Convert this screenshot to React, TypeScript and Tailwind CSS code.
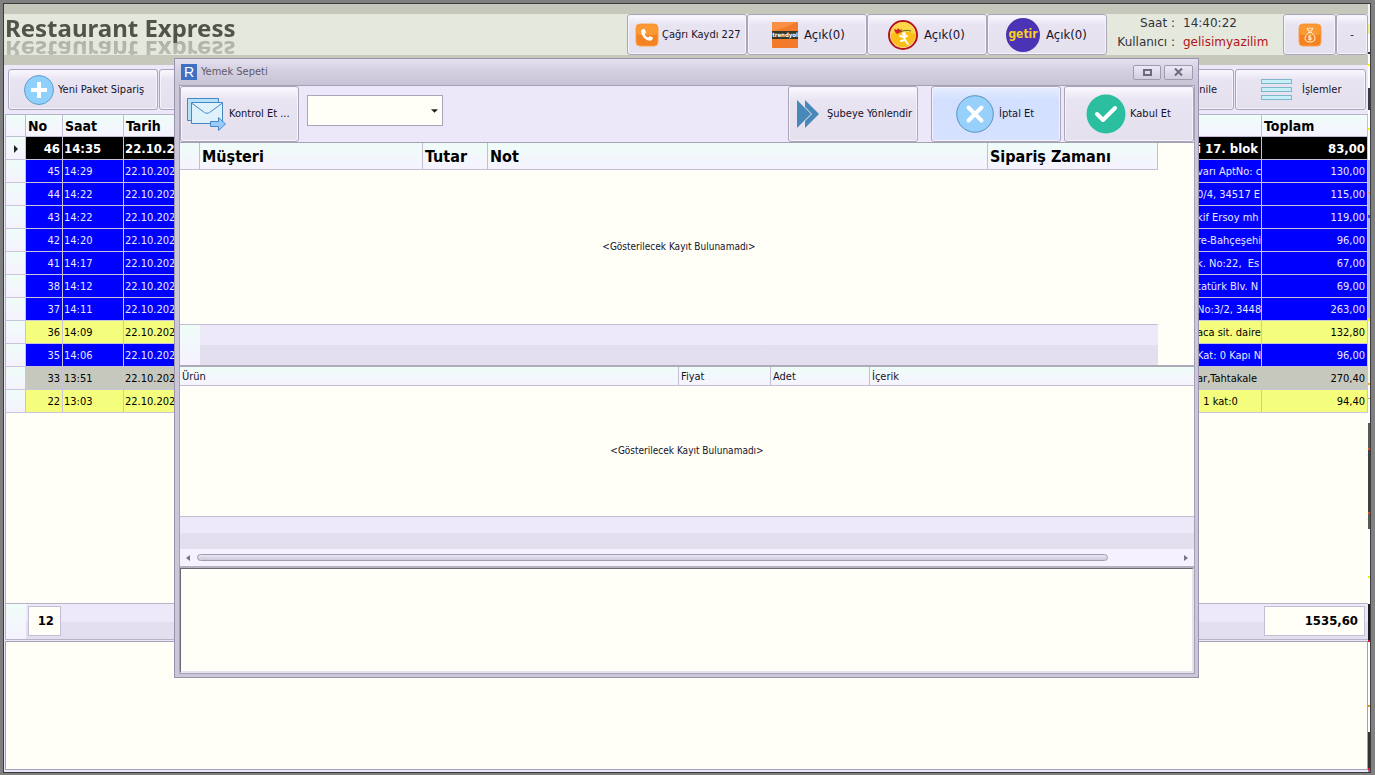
import { useState } from "react";
import type { ReactNode } from "react";

type OrderRow = {
  no: number;
  time: string;
  address: string;
  total: string;
  tone: "selected" | "blue" | "yellow" | "gray";
};

const ORDERS: OrderRow[] = [
  { no: 46, time: "14:35", address: "i 17. blok", total: "83,00", tone: "selected" },
  { no: 45, time: "14:29", address: "varı AptNo: c", total: "130,00", tone: "blue" },
  { no: 44, time: "14:22", address: "0/4, 34517 E", total: "115,00", tone: "blue" },
  { no: 43, time: "14:22", address: "kif Ersoy mh", total: "119,00", tone: "blue" },
  { no: 42, time: "14:20", address: "re-Bahçeşehi", total: "96,00", tone: "blue" },
  { no: 41, time: "14:17", address: "k. No:22,  Es", total: "67,00", tone: "blue" },
  { no: 38, time: "14:12", address: "tatürk Blv. N", total: "69,00", tone: "blue" },
  { no: 37, time: "14:11", address: "No:3/2, 3448", total: "263,00", tone: "blue" },
  { no: 36, time: "14:09", address: "aca sit. daire", total: "132,80", tone: "yellow" },
  { no: 35, time: "14:06", address: "Kat: 0 Kapı N", total: "96,00", tone: "blue" },
  { no: 33, time: "13:51", address: "ar,Tahtakale", total: "270,40", tone: "gray" },
  { no: 22, time: "13:03", address: "  1 kat:0", total: "94,40", tone: "yellow" },
];

const TONES = {
  selected: "bg-black text-white text-[13px] font-bold",
  blue: "bg-[#0000fe] text-[#e8e8ff]",
  yellow: "bg-[#f5fd7d] text-black",
  gray: "bg-[#c6c8bd] text-black",
};

// Slice of the desktop that shows past the right edge of the window
const DESKTOP_EDGE = [
  "h-[20px] bg-[#f4f4f4]",
  "h-[10px] bg-[#f2f58c]",
  "h-[18px] bg-white",
  "h-[2px] bg-[#333333]",
  "h-[10px] bg-white",
  "h-[2px] bg-[#f5f500]",
  "h-[22px] bg-white",
  "h-[22px] bg-[#3a3944]",
  "h-[18px] bg-white",
  "h-[2px] bg-[#f5f500]",
  "h-[30px] bg-white",
  "h-[32px] bg-[#b3b8f6]",
  "h-[2px] bg-[#f0a050]",
  "h-[21px] bg-[#b3b8f6]",
  "h-[3px] bg-[#3a40d0]",
  "h-[100px] bg-[#b3b8f6]",
  "h-[3px] bg-[#f5f500]",
  "h-[62px] bg-[#f6f6e0]",
  "h-[2px] bg-[#f0b000]",
  "h-[13px] bg-white",
  "h-[1px] bg-[#c8b040]",
  "h-[24px] bg-white",
  "h-[25px] bg-[#5a5a55]",
  "h-[2px] bg-[#e05010]",
  "h-[62px] bg-[#40403c]",
  "h-[2px] bg-[#e05010]",
  "h-[15px] bg-[#5a5a55]",
  "h-[47px] bg-white",
  "h-[2px] bg-[#e6f500]",
  "h-[26px] bg-white",
  "h-[36px] bg-[#1c1c1c]",
  "h-[2px] bg-[#e01030]",
  "h-[63px] bg-white",
  "h-[2px] bg-[#f09000]",
  "h-[25px] bg-white",
  "h-[36px] bg-[#33362f]",
  "h-[2px] bg-[#e01030]",
];

function ToolButton({ className, children }: { className: string; children: ReactNode }) {
  return (
    <button
      type="button"
      className={`flex shrink-0 items-center whitespace-nowrap rounded-[3px] border border-[#aaa6ba] text-[#16122a] shadow-[inset_0_0_0_1px_#f6f3fd] ${className}`}
    >
      {children}
    </button>
  );
}

const FACE = "bg-linear-to-b from-[#fbf9ff] via-[#e8e4f2] via-25% to-[#e4e0ee]";

function PhoneIcon() {
  return (
    <svg width="24" height="24" viewBox="0 0 24 24" aria-hidden="true">
      <rect x="1" y="1" width="22" height="22" rx="4" fill="#f58220" stroke="#f9a44c" />
      <rect x="2" y="2" width="20" height="10" rx="3" fill="#fb9a33" />
      <path d="M7.4 6.2 9.6 6l1.5 3.4-1.6 1.5c.8 1.700 2 2.900 3.700 3.700l1.500-1.600 3.200 1.500c0 1.900-1 3.200-2.700 3.200C10.700 17.600 6.500 13.200 6.300 8.700c0-1.200.3-2 1.100-2.500z" fill="#fff" />
    </svg>
  );
}

function TrendyolIcon() {
  return (
    <svg width="26" height="26" viewBox="0 0 26 26" aria-hidden="true">
      <rect width="26" height="26" rx="1" fill="#f27a2a" />
      <path d="M0 9C9 7 18 4 25 0H1a1 1 0 0 0-1 1z" fill="#fa8f45" />
      <rect y="9" width="26" height="8" fill="#333a2c" />
      <text x="13" y="15" textAnchor="middle" fontSize="6" fontWeight="700" fill="#fff" fontFamily="DejaVu Sans Condensed, sans-serif">trendyol</text>
    </svg>
  );
}

function YemekSepetiIcon() {
  return (
    <svg width="30" height="30" viewBox="0 0 30 30" aria-hidden="true">
      <circle cx="15" cy="15" r="14" fill="#fdf3e0" stroke="#b3151b" strokeWidth="2" />
      <circle cx="15" cy="15" r="12.500" fill="#fbbd16" />
      <path d="M3 14a12 12 0 0 1 24 0c-8-3-16-3-24 0z" fill="#fdd648" />
      <path d="m6 9 3 1 1-2 2 2 2-1-1 3-4 2-2-2z" fill="#d3202a" />
      <path d="M12 12c4-2 8-2 11-1" fill="none" stroke="#5a6a20" />
      <circle cx="16" cy="14" r="2" fill="#fff" />
      <path d="m12 16 4 1 3-1M16 17l1 3 3 4M17 20l-4 1" fill="none" stroke="#fff" strokeWidth="2" strokeLinecap="round" strokeLinejoin="round" />
    </svg>
  );
}

function GetirIcon() {
  return (
    <svg width="34" height="34" viewBox="0 0 34 34" aria-hidden="true">
      <circle cx="17" cy="17" r="17" fill="#4c32b4" />
      <text x="17" y="20" textAnchor="middle" fontSize="12" fontWeight="700" fill="#f8cf1c" fontFamily="DejaVu Sans Condensed, sans-serif">getir</text>
    </svg>
  );
}

function MoneyBagIcon() {
  return (
    <svg width="24" height="24" viewBox="0 0 24 24" fill="none" aria-hidden="true">
      <rect x="1" y="1" width="22" height="22" rx="4" fill="#f58220" stroke="#f9a44c" />
      <rect x="2" y="2" width="20" height="10" rx="3" fill="#fb9a33" />
      <path d="m9 5 1.500 3h3L15 5l-1.500 1L12 4.500 10.500 6zM10 9.500h4M10.500 10C8 11.500 7 13.500 7 15.500 7 18 9 19 12 19s5-1 5-3.500c0-2-1-4-3.500-5.500" stroke="#fff3de" strokeLinejoin="round" />
      <text x="12" y="17" textAnchor="middle" fontSize="7" fontWeight="700" fill="#fff3de" fontFamily="DejaVu Sans Condensed, sans-serif">$</text>
    </svg>
  );
}

function PlusIcon() {
  return (
    <svg width="32" height="32" viewBox="0 0 32 32" aria-hidden="true">
      <circle cx="16" cy="16" r="14.500" fill="#8fd0fc" stroke="#5f9fcb" />
      <path d="M16 8v16M8 16h16" stroke="#fff" strokeWidth="4" />
    </svg>
  );
}

function ListIcon() {
  return (
    <svg width="32" height="24" viewBox="0 0 32 24" fill="#c6effa" stroke="#7fb6cc" aria-hidden="true">
      <rect x="1.500" y="1.500" width="30" height="4" />
      <rect x="1.500" y="9.500" width="30" height="4" />
      <rect x="1.500" y="17.500" width="30" height="4" />
    </svg>
  );
}

function MailIcon() {
  return (
    <svg width="40" height="34" viewBox="0 0 40 34" stroke="#4788c4" aria-hidden="true">
      <path d="M.5 1.500h31v22H.5z" fill="#b6e2f8" />
      <path d="M4.500 5.500h31v21h-31z" fill="#dff2fb" />
      <path d="m4.500 6 13 9.500c1.500 1 3.500 1 5 0l13-9.500" fill="none" />
      <path d="M23.500 24.500h8v-4l7 6.500-7 6.500v-4h-8z" fill="#98ccfd" />
    </svg>
  );
}

function ForwardIcon() {
  return (
    <svg width="22" height="28" viewBox="0 0 22 28" fill="#4788b8" aria-hidden="true">
      <path d="M8 0l14 14L8 28z" />
      <path d="M0 0l14 14L0 28z" stroke="#e8e4f2" strokeWidth="1.500" paintOrder="stroke" />
    </svg>
  );
}

function CancelIcon() {
  return (
    <svg width="38" height="38" viewBox="0 0 38 38" aria-hidden="true">
      <circle cx="19" cy="19" r="18.300" fill="#98d0fc" stroke="#5d92bc" />
      <path d="m12.500 12.500 13 13m0-13-13 13" stroke="#fff" strokeWidth="4" strokeLinecap="round" />
    </svg>
  );
}

function AcceptIcon() {
  return (
    <svg width="40" height="40" viewBox="0 0 40 40" aria-hidden="true">
      <circle cx="20" cy="20" r="19.500" fill="#2bbf9f" />
      <path d="m11 20 6 6 12-12" fill="none" stroke="#fff" strokeWidth="4" strokeLinecap="round" strokeLinejoin="round" />
    </svg>
  );
}

function AppHeader() {
  return (
    <header className="flex h-[61px] shrink-0 bg-[#c6c8bc] pt-[10px] pb-[10px]">
      <div className="flex min-w-0 flex-1 bg-[#e5e9dd]">
        <div className="-mt-[10px] flex-1 overflow-hidden pt-2">
          <h1 className="ml-px h-8 whitespace-nowrap font-['Noto_Sans'] text-2xl leading-8 font-bold text-[#50544a] [-webkit-box-reflect:below_-10px_linear-gradient(rgba(0,0,0,0.25),rgba(0,0,0,0.4))]">
            Restaurant Express
          </h1>
        </div>
        <ToolButton className={`w-[120px] gap-[3px] pl-[7px] ${FACE}`}>
          <PhoneIcon />
          Çağrı Kaydı 227
        </ToolButton>
        <ToolButton className={`w-[120px] gap-[6px] pl-6 text-[13px] ${FACE}`}>
          <TrendyolIcon />
          Açık(0)
        </ToolButton>
        <ToolButton className={`w-[120px] gap-[6px] pl-5 text-[13px] ${FACE}`}>
          <YemekSepetiIcon />
          Açık(0)
        </ToolButton>
        <ToolButton className={`w-[120px] gap-[6px] pl-[18px] text-[13px] ${FACE}`}>
          <GetirIcon />
          Açık(0)
        </ToolButton>
        <dl className="grid w-44 shrink-0 grid-cols-[68px_1fr] content-start font-['DejaVu_Sans'] text-xs leading-[19px] text-[#33333f]">
          <dt className="text-right whitespace-nowrap">Saat :</dt>
          <dd className="pl-2">14:40:22</dd>
          <dt className="text-right whitespace-nowrap">Kullanıcı :</dt>
          <dd className="pl-2 text-[#b01420]">gelisimyazilim</dd>
        </dl>
        <ToolButton className={`w-[53px] justify-center ${FACE}`}>
          <MoneyBagIcon />
        </ToolButton>
        <ToolButton className={`w-8 justify-center ${FACE}`}>-</ToolButton>
      </div>
    </header>
  );
}

function OrdersToolbar() {
  return (
    <div className="flex h-[49px] shrink-0 gap-px bg-[#ede8f9] pt-1 pr-[2px] pb-1 pl-[3px]">
      <ToolButton className={`ml-px w-[150px] gap-[3px] pl-[14px] ${FACE}`}>
        <PlusIcon />
        Yeni Paket Sipariş
      </ToolButton>
      <ToolButton className={`w-[150px] justify-center ${FACE}`}>{null}</ToolButton>
      <div className="flex-1" />
      <ToolButton className={`w-[150px] justify-end pr-4 ${FACE}`}>Yenile</ToolButton>
      <ToolButton className={`w-[131px] gap-[10px] pl-6 ${FACE}`}>
        <ListIcon />
        İşlemler
      </ToolButton>
    </div>
  );
}

const HEAD_CELL = "border-r border-b border-[#c4bed4] text-left font-bold whitespace-nowrap";
const CELL = "overflow-hidden border-r border-b border-[#c9c3dc] pt-[2px] whitespace-pre";

function OrdersTable() {
  return (
    <div className="flex min-h-0 flex-1 flex-col border-t border-l border-[#b9b3c9] bg-[#fffff8]">
      <table className="w-full table-fixed border-separate border-spacing-0">
        <colgroup>
          <col className="w-5" />
          <col className="w-[37px]" />
          <col className="w-[61px]" />
          <col />
          <col className="w-[66px]" />
          <col className="w-[106px]" />
        </colgroup>
        <thead>
          <tr className="h-[22px] bg-linear-to-b from-[#effdf8] to-[#f6f2ff] text-sm text-black">
            <th className={HEAD_CELL} />
            <th className={`pl-[2px] ${HEAD_CELL}`}>No</th>
            <th className={`pl-[2px] ${HEAD_CELL}`}>Saat</th>
            <th className={`pl-[2px] ${HEAD_CELL}`}>Tarih</th>
            <th className={HEAD_CELL} />
            <th className={`pl-[2px] ${HEAD_CELL}`}>Toplam</th>
          </tr>
        </thead>
        <tbody>
          {ORDERS.map((o) => (
            <tr key={o.no} className={`h-[23px] ${TONES[o.tone]}`}>
              <td className={`bg-linear-to-b from-[#effdf8] to-[#f6f2ff] ${CELL}`}>
                {o.tone === "selected" && (
                  <svg className="ml-2" width="4" height="8" viewBox="0 0 4 8" aria-hidden="true">
                    <path d="M0 0l4 4-4 4z" fill="#222" />
                  </svg>
                )}
              </td>
              <td className={`pr-[2px] text-right ${CELL}`}>{o.no}</td>
              <td className={`pl-px ${CELL}`}>{o.time}</td>
              <td className={`pl-px ${CELL}`}>22.10.2022</td>
              <td className={`pl-px ${CELL}`}>{o.address}</td>
              <td className={`pr-[2px] text-right ${CELL}`}>{o.total}</td>
            </tr>
          ))}
        </tbody>
      </table>
      <div className="flex-1" />
      <div className="flex h-[37px] shrink-0 items-start justify-between border-y border-[#b9b3c9] bg-linear-to-b from-[#ede9f8] from-50% to-[#e3dfee] to-50% pr-[3px] text-[13px] font-bold text-black">
        <div className="flex items-start gap-[2px] self-stretch">
          <div className="w-5 self-stretch bg-linear-to-b from-[#effdf8] to-[#f6f2ff]" />
          <output className="mt-[2px] h-[30px] w-[33px] border border-[#c4bed4] bg-[#fffff8] pr-[6px] text-right leading-7">12</output>
        </div>
        <output className="mt-[2px] h-[30px] w-[101px] border border-[#c4bed4] bg-[#fffff8] pr-[6px] text-right leading-7">1535,60</output>
      </div>
    </div>
  );
}

function EmptyRow({ span }: { span: number }) {
  return (
    <td colSpan={span} className="text-center text-[10px] text-[#16122a]">
      &lt;Gösterilecek Kayıt Bulunamadı&gt;
    </td>
  );
}

function BasketDialog() {
  const [platform, setPlatform] = useState("");
  const [note, setNote] = useState("");

  return (
    <section
      role="dialog"
      aria-labelledby="basket-title"
      className="absolute top-[58px] right-[176px] left-[174px] flex flex-col border border-[#9994ab] bg-[#cbc6d8] pr-[3px] pb-[3px] pl-1"
    >
      <div className="-mr-[3px] -ml-1 flex h-[26px] shrink-0 items-center bg-linear-to-b from-[#e6e1f1] via-[#d6d1e1] via-40% to-[#c9c4d5] pr-[5px] pl-[6px]">
        <span className="mr-1 flex size-4 items-center justify-center bg-[#3f70c4] font-['Liberation_Sans'] text-sm leading-4 text-white">R</span>
        <h2 id="basket-title" className="flex-1 text-[#5d596c]">Yemek Sepeti</h2>
        <button type="button" aria-label="Büyüt" className="mr-[3px] flex h-[15px] w-7 items-center justify-center rounded-[2px] border border-[#9f9aaf] bg-linear-to-b from-[#ece8f5] to-[#d3cedf]">
          <svg width="9" height="7" viewBox="0 0 9 7" aria-hidden="true">
            <rect x="1" y="1" width="7" height="5" fill="none" stroke="#6d697b" strokeWidth="2" />
          </svg>
        </button>
        <button type="button" aria-label="Kapat" className="flex h-[15px] w-[29px] items-center justify-center rounded-[2px] border border-[#9f9aaf] bg-linear-to-b from-[#ece8f5] to-[#d3cedf]">
          <svg width="9" height="8" viewBox="0 0 9 8" aria-hidden="true">
            <path d="M1 .5l7 7M8 .5l-7 7" stroke="#6d697b" strokeWidth="2" />
          </svg>
        </button>
      </div>

      <div className="border border-[#a5a0b5] bg-[#fffff8]">
        <div className="flex h-[57px] items-start border-b border-[#a5a0b5] bg-[#ede8f9]">
          <ToolButton className={`h-[56px] w-[119px] gap-[2px] pl-[6px] ${FACE}`}>
            <MailIcon />
            Kontrol Et ...
          </ToolButton>
          <div className="relative mt-[9px] ml-2">
            <select
              aria-label="Platform"
              value={platform}
              onChange={(e) => setPlatform(e.target.value)}
              className="h-[31px] w-[136px] appearance-none border border-[#aaa6ba] bg-[#fffff8] px-2 outline-none"
            >
              <option value="" />
            </select>
            <svg className="pointer-events-none absolute top-[14px] right-[5px]" width="7" height="4" viewBox="0 0 8 4" aria-hidden="true">
              <path d="M0 0h8l-4 4z" fill="#222" />
            </svg>
          </div>
          <div className="flex-1" />
          <ToolButton className={`mr-[13px] h-[56px] w-[130px] gap-2 pl-2 ${FACE}`}>
            <ForwardIcon />
            Şubeye Yönlendir
          </ToolButton>
          <ToolButton className="mr-[3px] h-[56px] w-[130px] gap-[5px] bg-linear-to-b from-[#e6edff] via-[#d2dffe] via-25% to-[#d6e2ff] pl-6">
            <CancelIcon />
            İptal Et
          </ToolButton>
          <ToolButton className={`h-[56px] w-[130px] gap-1 pl-[21px] ${FACE}`}>
            <AcceptIcon />
            Kabul Et
          </ToolButton>
        </div>

        <div className="border-b-2 border-[#aeaaba] pr-9">
          <table className="w-full table-fixed border-separate border-spacing-0">
            <colgroup>
              <col className="w-5" />
              <col className="w-[223px]" />
              <col className="w-[65px]" />
              <col />
              <col className="w-[170px]" />
            </colgroup>
            <thead>
              <tr className="h-[27px] bg-linear-to-b from-[#effdf8] to-[#f6f2ff] text-base text-black">
                <th className={HEAD_CELL} />
                <th className={`pt-[2px] pl-[2px] ${HEAD_CELL}`}>Müşteri</th>
                <th className={`pt-[2px] pl-[2px] ${HEAD_CELL}`}>Tutar</th>
                <th className={`pt-[2px] pl-[2px] ${HEAD_CELL}`}>Not</th>
                <th className={`pt-[2px] pl-[2px] ${HEAD_CELL}`}>Sipariş Zamanı</th>
              </tr>
            </thead>
            <tbody>
              <tr className="h-[154px]">
                <td />
                <EmptyRow span={4} />
              </tr>
            </tbody>
            <tfoot>
              <tr className="h-[41px]">
                <td className="border-t border-[#c4bed4] bg-linear-to-b from-[#effdf8] to-[#f6f2ff]" />
                <td colSpan={4} className="border-t border-[#c4bed4] bg-linear-to-b from-[#ede9f8] from-50% to-[#e3dfee] to-50%" />
              </tr>
            </tfoot>
          </table>
        </div>

        <table className="w-full table-fixed border-separate border-spacing-0">
          <colgroup>
            <col />
            <col className="w-[92px]" />
            <col className="w-[99px]" />
            <col className="w-[324px]" />
          </colgroup>
          <thead>
            <tr className="h-[19px] bg-linear-to-b from-[#effdf8] to-[#f6f2ff] text-[#16122a]">
              {["Ürün", "Fiyat", "Adet", "İçerik"].map((label) => (
                <th key={label} className="border-r border-b border-[#c4bed4] pt-px pl-[2px] text-left font-normal last:border-r-0">
                  {label}
                </th>
              ))}
            </tr>
          </thead>
          <tbody>
            <tr className="h-[130px]">
              <EmptyRow span={4} />
            </tr>
          </tbody>
          <tfoot>
            <tr className="h-[33px]">
              <td colSpan={4} className="border-t border-[#c4bed4] bg-linear-to-b from-[#ede9f8] from-50% to-[#e3dfee] to-50%" />
            </tr>
          </tfoot>
        </table>

        <div className="flex h-[17px] items-center justify-between bg-[#f5f1ff] px-[6px]">
          <svg width="4" height="6" viewBox="0 0 4 6" aria-hidden="true">
            <path d="M4 0L0 3l4 3z" fill="#777386" />
          </svg>
          <div className="mx-[7px] flex-1">
            <div className="h-[7px] w-[93%] rounded-full border border-[#a29db1] bg-linear-to-b from-[#e9e5f2] to-[#cfcadb]" />
          </div>
          <svg width="4" height="6" viewBox="0 0 4 6" aria-hidden="true">
            <path d="M0 0l4 3-4 3z" fill="#777386" />
          </svg>
        </div>

        <div className="border-t-2 border-[#b5b1c0]">
          <textarea
            aria-label="Sipariş notu"
            value={note}
            onChange={(e) => setNote(e.target.value)}
            className="block h-[105px] w-full resize-none border border-r-2 border-b-2 border-[#e6e2ee] border-t-[#6b6872] border-l-[#6b6872] bg-[#fffff8] p-1 outline-none"
          />
        </div>
      </div>
    </section>
  );
}

export default function App() {
  return (
    <div className="relative flex h-screen min-h-[700px] bg-[#808080] pt-[3px] pr-[4px] pb-[2px] pl-[3px] font-['DejaVu_Sans_Condensed','Noto_Sans',sans-serif] text-[11px] leading-4">
      <div className="flex min-w-0 flex-1 border border-[#3a3a3f]">
        <main className="flex min-w-0 flex-1 flex-col bg-[#ede8f9]">
          <AppHeader />
          <OrdersToolbar />
          <div className="flex min-h-0 flex-1 flex-col pb-[2px] pl-px">
            <OrdersTable />
            <div className="mt-[1px] h-[129px] shrink-0 border border-[#a5a0b8] bg-[#fffff8]" />
          </div>
        </main>
        <div className="flex w-[2px] shrink-0 flex-col overflow-hidden" aria-hidden="true">
          {DESKTOP_EDGE.map((c, i) => (
            <div key={i} className={`shrink-0 ${c}`} />
          ))}
        </div>
      </div>
      <BasketDialog />
    </div>
  );
}
